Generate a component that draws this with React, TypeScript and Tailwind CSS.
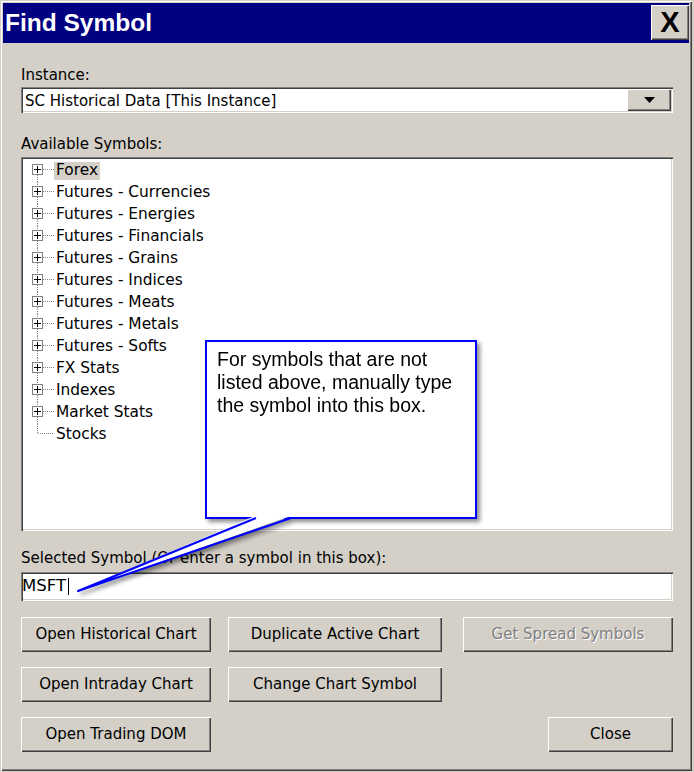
import React from 'react';

const TREE_ITEMS: { label: string; leaf?: boolean }[] = [
    { label: 'Forex' },
    { label: 'Futures - Currencies' },
    { label: 'Futures - Energies' },
    { label: 'Futures - Financials' },
    { label: 'Futures - Grains' },
    { label: 'Futures - Indices' },
    { label: 'Futures - Meats' },
    { label: 'Futures - Metals' },
    { label: 'Futures - Softs' },
    { label: 'FX Stats' },
    { label: 'Indexes' },
    { label: 'Market Stats' },
    { label: 'Stocks', leaf: true },
];

const raised = 'shadow-[inset_1px_1px_#ffffff,inset_-1px_-1px_#404040,inset_-2px_-2px_#808080]';
const sunken =
    'shadow-[inset_1px_1px_#808080,inset_2px_2px_#404040,inset_-1px_-1px_#ffffff,inset_-2px_-2px_#d4d0c8]';

function TreeGutter({ first, leaf }: { first: boolean; leaf?: boolean }) {
    const dots = { stroke: '#808080', strokeDasharray: '1 1' };
    if (leaf) {
        return (
            <svg width="31" height="22" className="block shrink-0">
                <line x1="14.5" y1="0" x2="14.5" y2="10" {...dots} />
                <line x1="15" y1="9.5" x2="31" y2="9.5" {...dots} />
            </svg>
        );
    }
    return (
        <svg width="31" height="22" className="block shrink-0">
            {!first && <line x1="14.5" y1="0" x2="14.5" y2="4" {...dots} />}
            <line x1="14.5" y1="15" x2="14.5" y2="22" {...dots} />
            <line x1="20" y1="9.5" x2="31" y2="9.5" {...dots} />
            <rect x="9.5" y="4.5" width="10" height="10" fill="#ffffff" stroke="#808080" />
            <line x1="11" y1="9.5" x2="18" y2="9.5" stroke="#000000" />
            <line x1="14.5" y1="6" x2="14.5" y2="13" stroke="#000000" />
        </svg>
    );
}

function WinButton({
    children,
    width,
    disabled = false,
}: {
    children: React.ReactNode;
    width: string;
    disabled?: boolean;
}) {
    return (
        <button
            type="button"
            className={`${width} h-[35px] bg-[#d4d0c8] ${raised} flex items-center justify-center text-[15px] ${
                disabled ? 'text-[#808080] [text-shadow:1px_1px_0_#ffffff]' : 'text-black'
            }`}
        >
            {children}
        </button>
    );
}

function Callout() {
    return (
        <div className="pointer-events-none absolute inset-0 drop-shadow-[3px_3px_2px_rgba(0,0,0,0.45)]">
            <div className="absolute left-[205px] top-[340px] h-[179px] w-[272px] border-2 border-[#0000ff] bg-white pl-[10px] pt-[6px] font-['Liberation_Sans',Arial,sans-serif] text-[19.5px] leading-[23px] text-black">
                For symbols that are not
                <br />
                listed above, manually type
                <br />
                the symbol into this box.
            </div>
            <svg width="694" height="772" className="absolute left-0 top-0">
                <polygon points="255,516 78,591 291,516" fill="#ffffff" />
                <polyline
                    points="256,518 78,591 291,518"
                    fill="none"
                    stroke="#0000ff"
                    strokeWidth="2"
                    strokeLinejoin="round"
                />
            </svg>
        </div>
    );
}

export default function App() {
    return (
        <div className="relative h-[772px] w-[694px] bg-[#d4d0c8] font-['DejaVu_Sans',Verdana,sans-serif] text-[15px] text-black">
            <div className="flex h-[771px] w-[692px] flex-col p-[3px] shadow-[inset_1px_1px_#d4d0c8,inset_2px_2px_#ffffff,inset_-1px_-1px_#404040,inset_-2px_-2px_#808080]">
                {/* title bar */}
                <div className="flex h-[40px] shrink-0 items-start justify-between bg-[#000080] pl-[2px]">
                    <span className="self-center font-['Liberation_Sans',Arial,sans-serif] text-[24.5px] font-bold leading-none text-white">
                        Find Symbol
                    </span>
                    <button
                        type="button"
                        className={`mt-[2px] flex h-[35px] w-[38px] items-center justify-center bg-[#d4d0c8] ${raised} font-['Liberation_Sans',Arial,sans-serif] text-[29px] font-bold leading-none text-black`}
                    >
                        X
                    </button>
                </div>

                <div className="flex flex-1 flex-col pl-[18px] pr-[16px]">
                    <div className="mt-[23px] h-[18px] leading-[18px]">Instance:</div>
                    <div className={`mt-[3px] flex h-[26px] items-center justify-between bg-white pl-[4px] pr-[2px] ${sunken}`}>
                        <span className="pt-[2px]">SC Historical Data [This Instance]</span>
                        <div className={`flex h-[22px] w-[44px] items-center justify-center bg-[#d4d0c8] ${raised}`}>
                            <svg width="11" height="6" viewBox="0 0 11 6" className="block">
                                <polygon points="0,0 11,0 5.5,6" fill="#000000" />
                            </svg>
                        </div>
                    </div>

                    <div className="mt-[22px] h-[18px] leading-[18px]">Available Symbols:</div>
                    <div className={`mt-[4px] h-[374px] bg-white pl-[2px] pt-[3px] text-[15.4px] ${sunken}`}>
                        {TREE_ITEMS.map((item, i) => (
                            <div key={item.label} className="flex h-[22px] items-center">
                                <TreeGutter first={i === 0} leaf={item.leaf} />
                                <span
                                    className={`flex h-[18px] items-center px-[2px] ${
                                        i === 0 ? 'bg-[#d4d0c8]' : ''
                                    }`}
                                >
                                    {item.label}
                                </span>
                            </div>
                        ))}
                    </div>

                    <div className="mt-[18px] h-[18px] leading-[18px]">
                        Selected Symbol (Or enter a symbol in this box):
                    </div>
                    <div className={`mt-[5px] flex h-[29px] items-center bg-white pl-[1px] text-[16.5px] ${sunken}`}>
                        <span>MSFT</span>
                        <span className="ml-[2px] h-[17px] w-[1px] bg-black" />
                    </div>

                    <div className="mt-[16px] flex">
                        <WinButton width="w-[190px]">Open Historical Chart</WinButton>
                        <div className="ml-[17px]">
                            <WinButton width="w-[214px]">Duplicate Active Chart</WinButton>
                        </div>
                        <div className="ml-[21px]">
                            <WinButton width="w-[210px]" disabled>
                                Get Spread Symbols
                            </WinButton>
                        </div>
                    </div>
                    <div className="mt-[15px] flex">
                        <WinButton width="w-[190px]">Open Intraday Chart</WinButton>
                        <div className="ml-[17px]">
                            <WinButton width="w-[214px]">Change Chart Symbol</WinButton>
                        </div>
                    </div>
                    <div className="mt-[15px] flex justify-between">
                        <WinButton width="w-[190px]">Open Trading DOM</WinButton>
                        <WinButton width="w-[125px]">Close</WinButton>
                    </div>
                </div>
            </div>
            <Callout />
        </div>
    );
}
